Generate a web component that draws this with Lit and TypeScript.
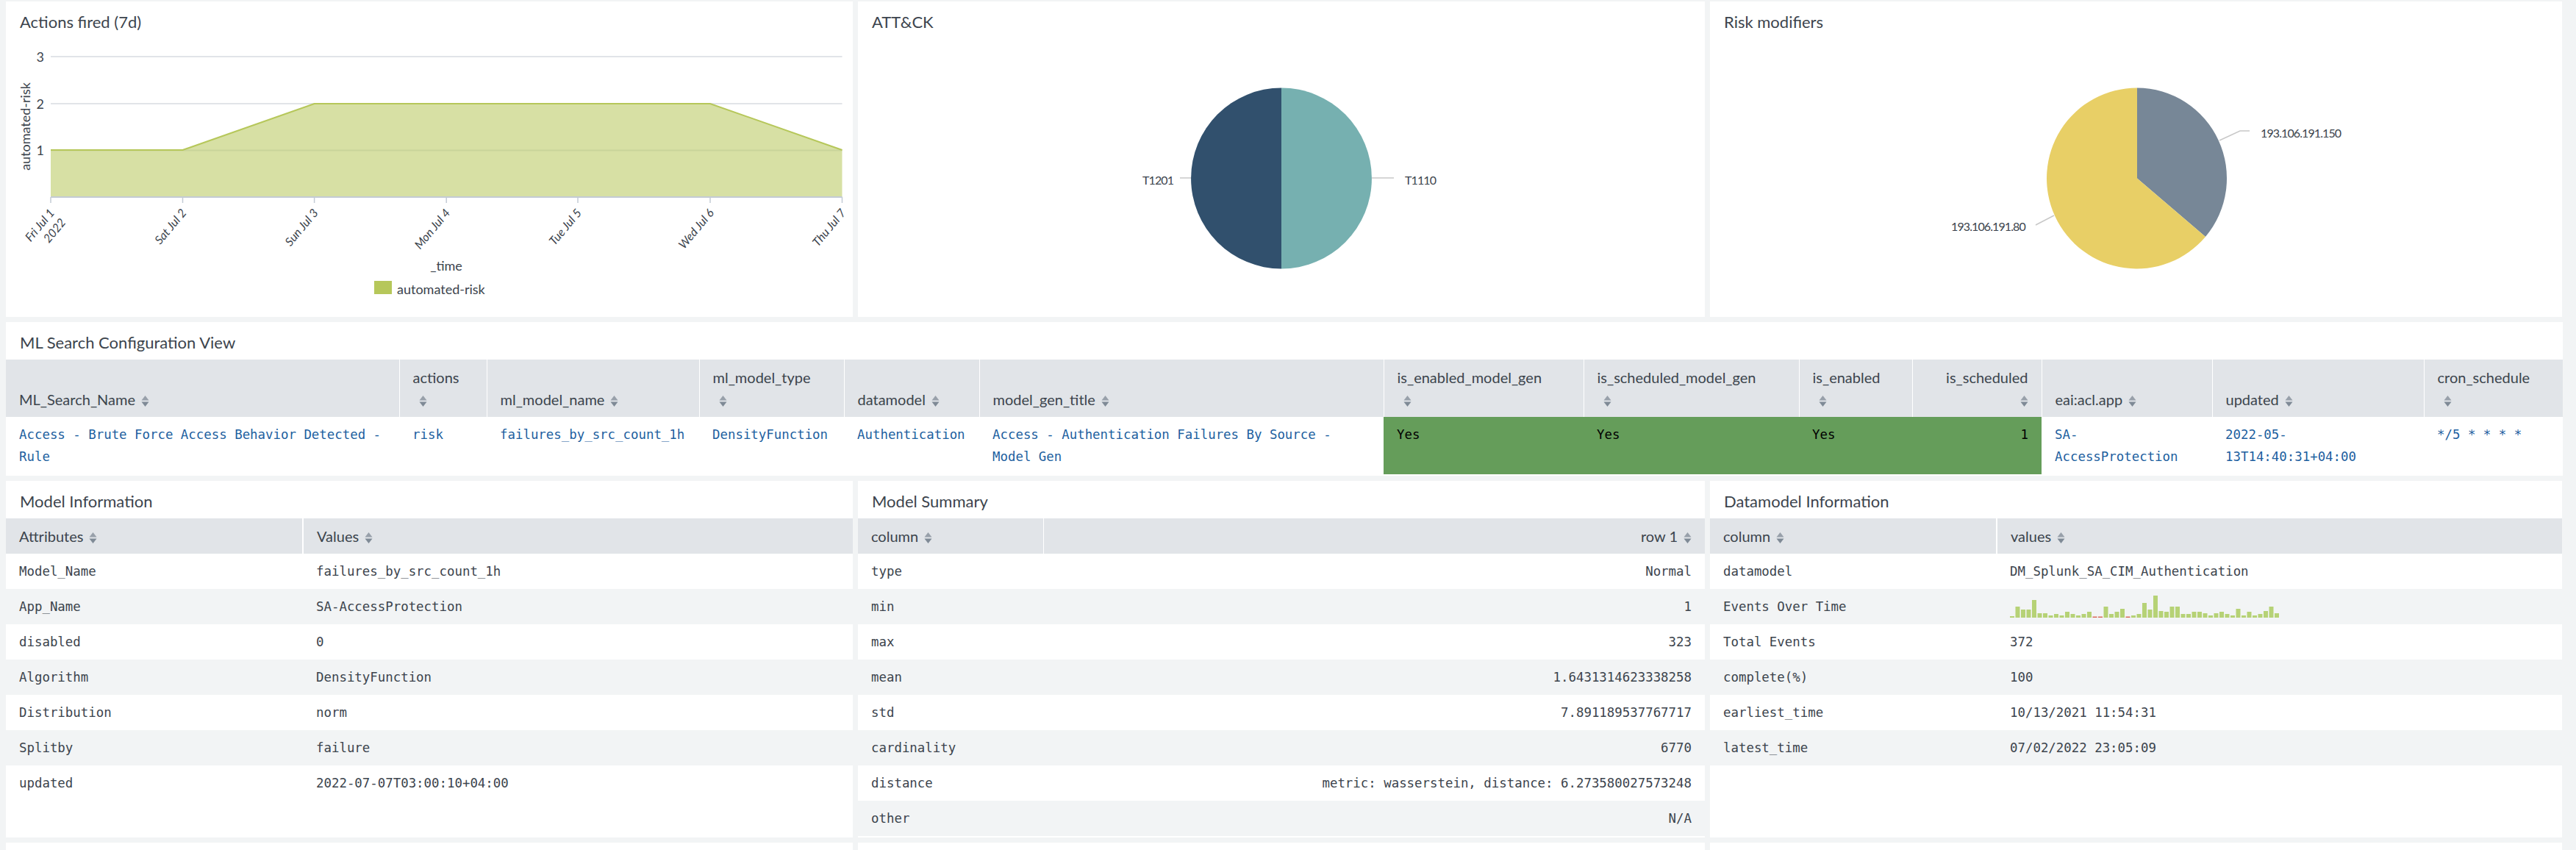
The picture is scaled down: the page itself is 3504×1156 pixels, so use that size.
import { LitElement, html, css, svg } from "lit";
import { customElement } from "lit/decorators.js";

interface MlColumn {
  label: string;
  width: number;
  stacked?: boolean;
  right?: boolean;
}

const ML_COLUMNS: MlColumn[] = [
  { label: "ML_Search_Name", width: 535 },
  { label: "actions", width: 119, stacked: true },
  { label: "ml_model_name", width: 289 },
  { label: "ml_model_type", width: 197, stacked: true },
  { label: "datamodel", width: 184 },
  { label: "model_gen_title", width: 550 },
  { label: "is_enabled_model_gen", width: 272, stacked: true },
  { label: "is_scheduled_model_gen", width: 293, stacked: true },
  { label: "is_enabled", width: 154, stacked: true },
  { label: "is_scheduled", width: 176, stacked: true, right: true },
  { label: "eai:acl.app", width: 232 },
  { label: "updated", width: 288 },
  { label: "cron_schedule", width: 189, stacked: true },
];

const MODEL_INFO = [
  ["Model_Name", "failures_by_src_count_1h"],
  ["App_Name", "SA-AccessProtection"],
  ["disabled", "0"],
  ["Algorithm", "DensityFunction"],
  ["Distribution", "norm"],
  ["Splitby", "failure"],
  ["updated", "2022-07-07T03:00:10+04:00"],
];

const MODEL_SUMMARY = [
  ["type", "Normal"],
  ["min", "1"],
  ["max", "323"],
  ["mean", "1.6431314623338258"],
  ["std", "7.891189537767717"],
  ["cardinality", "6770"],
  ["distance", "metric: wasserstein, distance: 6.273580027573248"],
  ["other", "N/A"],
];

const DATAMODEL_INFO: [string, string | null][] = [
  ["datamodel", "DM_Splunk_SA_CIM_Authentication"],
  ["Events Over Time", null],
  ["Total Events", "372"],
  ["complete(%)", "100"],
  ["earliest_time", "10/13/2021 11:54:31"],
  ["latest_time", "07/02/2022 23:05:09"],
];

// bar heights of the sparkline, negative ones are the red buckets
const SPARK = [
  2, 15, 11, 11, 24, 6, 6, 3, 5, 3, 8, 5, 3, 5, 8, -1.5, -1.5, 15, 5, 8, 12, -1.5, 3, 5, 20, 11, 30, 9, 8, 15, 15, 5, 5,
  8, 8, 6, 3, 6, 8, 5, 3, 12, 3, 8, 3, 5, 9, 15, 6,
];

const TICKS = [69, 248.5, 427.6, 607.2, 786, 966, 1145.5];
const TICK_LABELS = ["Fri Jul 1", "Sat Jul 2", "Sun Jul 3", "Mon Jul 4", "Tue Jul 5", "Wed Jul 6", "Thu Jul 7"];

@customElement("app-root")
export class AppRoot extends LitElement {
  static styles = css`
    :host {
      display: block;
      height: 1156px;
      overflow: hidden;
      background: #f2f4f5;
      color: #3c444d;
      font-family: Lato, "Liberation Sans", sans-serif;
    }
    .page {
      display: flex;
      flex-direction: column;
      gap: 7px;
      padding: 2px 18px 0 8px;
    }
    .row {
      display: grid;
      grid-template-columns: 1152px 1152px 1159px;
      gap: 7px;
    }
    .panel {
      background: #fff;
      padding-bottom: 2px;
      min-width: 0;
    }
    .charts .panel {
      height: 429px;
      padding-bottom: 0;
    }
    .stub {
      height: 10px;
      padding: 0;
    }
    .title {
      height: 51px;
      padding: 0 19px;
      font-size: 22px;
      line-height: 55px;
      white-space: nowrap;
    }
    .chart {
      display: block;
    }
    .chart text {
      font-family: Lato, "Liberation Sans", sans-serif;
      fill: #3c444d;
      font-size: 18px;
    }
    .chart .tick {
      font-size: 16px;
    }
    .chart .slice {
      font-size: 16px;
      letter-spacing: -0.9px;
    }
    table {
      width: 100%;
      table-layout: fixed;
      border-collapse: collapse;
    }
    th {
      background: #e1e4e8;
      font-weight: 400;
      font-size: 20px;
      line-height: 30px;
      padding: 9px 18px;
      text-align: left;
      vertical-align: bottom;
      border-left: 1px solid #fff;
    }
    th:first-child {
      border-left: 0;
    }
    th.wide {
      border-left-width: 2px;
    }
    th.right,
    td.right {
      text-align: right;
    }
    th.stack .text {
      display: block;
    }
    .sort {
      display: inline-block;
      width: 11px;
      height: 15px;
      margin-left: 8px;
      vertical-align: -2px;
      fill: #7f8a96;
    }
    td {
      font-family: "DejaVu Sans Mono", "Liberation Mono", monospace;
      font-size: 17.4px;
      line-height: 30px;
      padding: 9px 18px;
      vertical-align: top;
    }
    .striped tr:nth-child(even) td {
      background: #f2f4f5;
    }
    .link {
      color: #1d5f9f;
    }
    .ok {
      background: #659d5a;
      color: #000;
    }
    .spark {
      display: block;
    }
  `;

  private sortIcon() {
    return html`<svg class="sort" viewBox="0 0 11 15">
      <path d="M5.5 0 L10.5 6.5 L0.5 6.5 Z" fill-opacity="0.75"></path>
      <path d="M0.5 8.5 L10.5 8.5 L5.5 15 Z"></path>
    </svg>`;
  }

  private areaChart() {
    return html`<svg class="chart" width="1152" height="376" viewBox="8 53 1152 376">
      ${[77, 141, 204.5].map((y) => svg`<line x1="69" x2="1145.5" y1=${y} y2=${y} stroke="#e1e4e8" stroke-width="2"></line>`)}
      <path d="M69 204 L248.5 204 L427.6 141 L966 141 L1145.5 204 L1145.5 268 L69 268 Z" fill="#b6c75a" fill-opacity="0.55"></path>
      <path d="M69 204 L248.5 204 L427.6 141 L966 141 L1145.5 204" fill="none" stroke="#b6c75a" stroke-width="2"></path>
      <line x1="69" x2="1145.5" y1="268" y2="268" stroke="#c3cbd4" stroke-width="2"></line>
      ${TICKS.map((x) => svg`<line x1=${x} x2=${x} y1="268" y2="276" stroke="#c3cbd4" stroke-width="1.5"></line>`)}
      ${[
        ["3", 84],
        ["2", 148],
        ["1", 211],
      ].map(([t, y]) => svg`<text x="60" y=${y} text-anchor="end">${t}</text>`)}
      <text x="0" y="0" text-anchor="middle" transform="translate(41 172) rotate(-90)">automated-risk</text>
      ${TICKS.map(
        (x, i) => svg`<text class="tick" text-anchor="end" font-style="italic" transform="translate(${x + 6} 290) rotate(-50)">
          ${TICK_LABELS[i]}${i === 0 ? svg`<tspan x="0" dy="20">2022</tspan>` : ""}
        </text>`
      )}
      <text x="607" y="368" text-anchor="middle">_time</text>
      <rect x="509" y="382" width="24" height="18" fill="#b6c75a"></rect>
      <text x="540" y="400">automated-risk</text>
    </svg>`;
  }

  private attackPie() {
    return html`<svg class="chart" width="1152" height="376" viewBox="1167 53 1152 376">
      <path d="M1743 119.5 A123 123 0 0 1 1743 365.5 Z" fill="#76b0b0"></path>
      <path d="M1743 119.5 A123 123 0 0 0 1743 365.5 Z" fill="#31506d"></path>
      <line x1="1605" x2="1620" y1="242" y2="242" stroke="#c8c8c8" stroke-width="1.5"></line>
      <line x1="1866" x2="1896" y1="242" y2="242" stroke="#c8c8c8" stroke-width="1.5"></line>
      <text class="slice" x="1554" y="251">T1201</text>
      <text class="slice" x="1911" y="251">T1110</text>
    </svg>`;
  }

  private riskPie() {
    return html`<svg class="chart" width="1159" height="376" viewBox="2326 53 1159 376">
      <path d="M2907 242.5 L2907 119.5 A122.5 123 0 0 1 3000 322 Z" fill="#778797"></path>
      <path d="M2907 242.5 L3000 322 A122.5 123 0 1 1 2907 119.5 Z" fill="#e8cf66"></path>
      <path d="M3019 191 L3047 178 L3060 178" fill="none" stroke="#c8c8c8" stroke-width="1.5"></path>
      <path d="M2794 293 L2769 306" fill="none" stroke="#c8c8c8" stroke-width="1.5"></path>
      <text class="slice" x="3075" y="187">193.106.191.150</text>
      <text class="slice" x="2654" y="314">193.106.191.80</text>
    </svg>`;
  }

  private mlTable() {
    const link = (t: string) => html`<td class="link">${t}</td>`;
    return html`<table>
      <colgroup>
        ${ML_COLUMNS.map((c) => html`<col style="width:${c.width}px" />`)}
      </colgroup>
      <thead>
        <tr>
          ${ML_COLUMNS.map(
            (c) => html`<th class="${c.stacked ? "stack" : ""} ${c.right ? "right" : ""}">
              <span class="text">${c.label}</span>${this.sortIcon()}
            </th>`
          )}
        </tr>
      </thead>
      <tbody>
        <tr>
          ${link("Access - Brute Force Access Behavior Detected - Rule")} ${link("risk")} ${link("failures_by_src_count_1h")}
          ${link("DensityFunction")} ${link("Authentication")} ${link("Access - Authentication Failures By Source - Model Gen")}
          <td class="ok">Yes</td>
          <td class="ok">Yes</td>
          <td class="ok">Yes</td>
          <td class="ok right">1</td>
          ${link("SA-AccessProtection")} ${link("2022-05-13T14:40:31+04:00")} ${link("*/5 * * * *")}
        </tr>
      </tbody>
    </table>`;
  }

  private sparkline() {
    return html`<svg class="spark" width="368" height="30" viewBox="0 0 368 30">
      ${SPARK.map((h, i) => {
        const bad = h < 0;
        const height = Math.abs(h);
        return svg`<rect x=${i * 7.5} y=${30 - height} width="6" height=${height} fill=${bad ? "#d96a5a" : "#b6d276"}></rect>`;
      })}
    </svg>`;
  }

  private kvTable(head: string[], firstWidth: number, rows: [string, unknown][], right = false, wide = true) {
    return html`<table class="striped">
      <colgroup>
        <col style="width:${firstWidth}px" />
        <col />
      </colgroup>
      <thead>
        <tr>
          <th><span class="text">${head[0]}</span>${this.sortIcon()}</th>
          <th class="${right ? "right" : ""} ${wide ? "wide" : ""}"><span class="text">${head[1]}</span>${this.sortIcon()}</th>
        </tr>
      </thead>
      <tbody>
        ${rows.map(([k, v]) => html`<tr><td>${k}</td><td class="${right ? "right" : ""}">${v}</td></tr>`)}
      </tbody>
    </table>`;
  }

  render() {
    const dataRows = DATAMODEL_INFO.map(([k, v]) => [k, v ?? this.sparkline()] as [string, unknown]);
    return html`<div class="page">
      <div class="row charts">
        <section class="panel"><div class="title">Actions fired (7d)</div>${this.areaChart()}</section>
        <section class="panel"><div class="title">ATT&amp;CK</div>${this.attackPie()}</section>
        <section class="panel"><div class="title">Risk modifiers</div>${this.riskPie()}</section>
      </div>
      <section class="panel">
        <div class="title">ML Search Configuration View</div>
        ${this.mlTable()}
      </section>
      <div class="row">
        <section class="panel">
          <div class="title">Model Information</div>
          ${this.kvTable(["Attributes", "Values"], 404, MODEL_INFO as [string, unknown][])}
        </section>
        <section class="panel">
          <div class="title">Model Summary</div>
          ${this.kvTable(["column", "row 1"], 252, MODEL_SUMMARY as [string, unknown][], true, false)}
        </section>
        <section class="panel">
          <div class="title">Datamodel Information</div>
          ${this.kvTable(["column", "values"], 390, dataRows)}
        </section>
      </div>
      <div class="row">
        <section class="panel stub"></section>
        <section class="panel stub"></section>
        <section class="panel stub"></section>
      </div>
    </div>`;
  }
}
